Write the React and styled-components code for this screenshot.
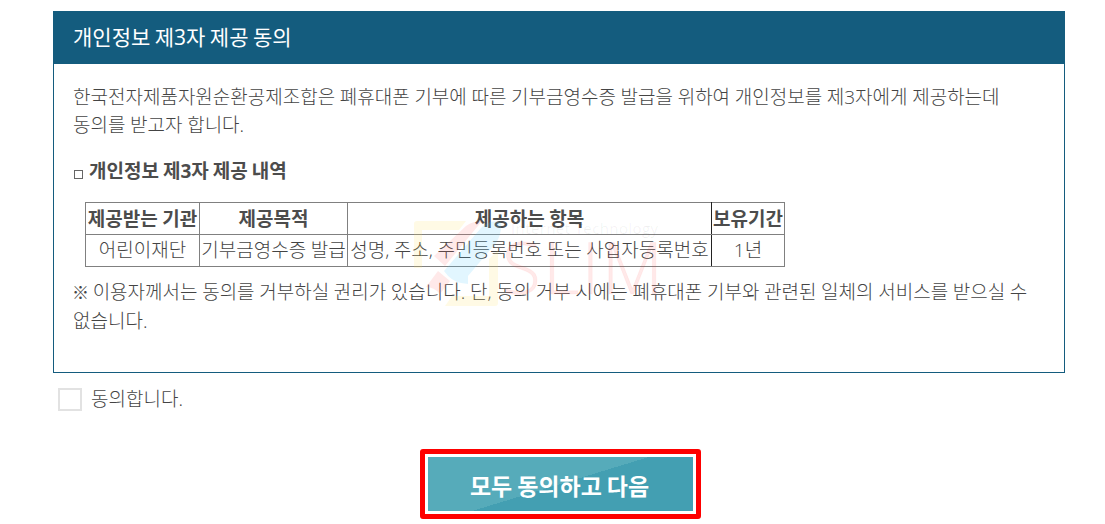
import React from 'react';
import styled, { createGlobalStyle } from 'styled-components';

const GlobalStyle = createGlobalStyle`
    * {
        box-sizing: border-box;
    }

    body {
        margin: 0;
        background: #fff;
        color: #444;
        font-family: "Open Sans", "Noto Sans CJK KR", sans-serif;
        font-size: 19px;
        font-weight: 300;
        line-height: 28px;
        word-break: keep-all;
        overflow: hidden;
    }
`

const Page = styled.main`
    width: 1105px;
    height: 524px;
    padding: 11px 40px 0 53px;
`

const Panel = styled.section`
    height: 362px;
    border: 1px solid #145c7e;
`

const PanelTitle = styled.h1`
    height: 52px;
    margin: 0;
    padding-left: 19px;
    background: #145c7e;
    color: #fff;
    font-size: 21px;
    font-weight: 400;
    line-height: 51px;
    word-spacing: -1px;
`

const PanelBody = styled.div`
    position: relative;
    padding: 19px 19px 0;
`

const Text = styled.p`
    margin: 0;
    white-space: nowrap;
    word-spacing: -0.3px;
`

const NoteMark = styled.span`
    margin: 0 -1px 0 -1px;
    font-size: 17px;
`

const SubTitle = styled.h2`
    display: flex;
    align-items: center;
    gap: 6px;
    margin: 18px 0 17px 1px;
    color: #4c4c4c;
    font-size: 19px;
    font-weight: 700;
    word-spacing: -0.9px;
`

const Square = styled.span`
    width: 9px;
    height: 9px;
    margin-top: 7px;
    border: 1px solid #666;
`

const Table = styled.table`
    width: 700px;
    margin: 0 0 11px 12px;
    border-collapse: collapse;
    table-layout: fixed;
    text-align: center;
    word-spacing: -0.4px;
`

const Cell = styled.td`
    height: 32px;
    padding: 0 0 1px;
    border: 1px solid #808080;
    border-right-color: ${({ $dark }) => ($dark ? '#222' : '#808080')};
    line-height: 28px;
    white-space: nowrap;
`

const HeadCell = styled(Cell)`
    padding: 0;
    color: #4c4c4c;
    font-weight: 700;
`

const Watermark = styled.svg`
    position: absolute;
    left: 348px;
    top: 151px;
    overflow: visible;
    pointer-events: none;
`

const Agree = styled.label`
    display: flex;
    align-items: center;
    gap: 9px;
    margin: 12px 0 0 5px;
`

const CheckBox = styled.input`
    appearance: none;
    width: 24px;
    height: 23px;
    margin: 1px 0 0;
    border: 2px solid #e2e2e2;
    background: #fff;
`

const ButtonFrame = styled.div`
    width: 281px;
    height: 70px;
    margin: 36px 0 0 367px;
    padding: 3px;
    border: 5px solid #fe0000;
    border-radius: 3px;
`

const NextButton = styled.button`
    display: block;
    width: 265px;
    height: 54px;
    padding: 2px 2px 0 0;
    border: none;
    background: linear-gradient(163deg, #56abba 50%, #439fb2 50%);
    color: #fff;
    font-family: inherit;
    font-size: 23px;
    font-weight: 700;
    word-spacing: -1px;
`

const SlimMark = () => (
    <Watermark width="262" height="98" viewBox="402 215 262 98">
        <g fill="#ffdc50" fillOpacity="0.15">
            <path d="M417 221h49l-7 9h-37v38h-8v-44q0-3 3-3z" />
            <path d="M498 250v53q0 3-3 3h-50l7-10h37v-37z" />
        </g>
        <path fill="#f66" fillOpacity="0.14" d="M434 256 466 226Q473 221 482 221L445 266zM426 287 438 271 450 281 440 294Q434 287 426 287z" />
        <path fill="#5cf" fillOpacity="0.17" d="M444 271 481 228Q489 219 501 222Q502 234 496 243L468 276V284L461 283Q451 281 444 271z" />
        <text x="511" y="234" fill="#000" fillOpacity="0.06" fontSize="15" fontWeight="400" textLength="147">Internet Technology</text>
        <text x="502" y="294" fill="#f33" fillOpacity="0.11" fontSize="71" fontWeight="300" stroke="#f33" strokeOpacity="0.04" textLength="161">SLIM</text>
    </Watermark>
)

const COLUMNS = [114, 148, 364, 73]
const HEADS = ['제공받는 기관', '제공목적', '제공하는 항목', '보유기간']
const VALUES = ['어린이재단', '기부금영수증 발급', '성명, 주소, 주민등록번호 또는 사업자등록번호', '1년']

const App = () => {
    return (
        <>
            <GlobalStyle />
            <Page>
                <Panel>
                    <PanelTitle>개인정보 제3자 제공 동의</PanelTitle>
                    <PanelBody>
                        <Text>
                            한국전자제품자원순환공제조합은 폐휴대폰 기부에 따른 기부금영수증 발급을 위하여 개인정보를 제3자에게 제공하는데
                            <br />
                            동의를 받고자 합니다.
                        </Text>
                        <SubTitle><Square />개인정보 제3자 제공 내역</SubTitle>
                        <Table>
                            <colgroup>
                                {COLUMNS.map((w) => <col key={w} width={w} />)}
                            </colgroup>
                            <tbody>
                                <tr>
                                    {HEADS.map((t, i) => <HeadCell as="th" key={t} $dark={i === 2}>{t}</HeadCell>)}
                                </tr>
                                <tr>
                                    {VALUES.map((t, i) => <Cell key={t} $dark={i === 2}>{t}</Cell>)}
                                </tr>
                            </tbody>
                        </Table>
                        <Text>
                            <NoteMark>※</NoteMark> 이용자께서는 동의를 거부하실 권리가 있습니다. 단, 동의 거부 시에는 폐휴대폰 기부와 관련된 일체의 서비스를 받으실 수
                            <br />
                            없습니다.
                        </Text>
                        <SlimMark />
                    </PanelBody>
                </Panel>
                <Agree>
                    <CheckBox type="checkbox" />
                    동의합니다.
                </Agree>
                <ButtonFrame>
                    <NextButton>모두 동의하고 다음</NextButton>
                </ButtonFrame>
            </Page>
        </>
    )
}

export default App;
